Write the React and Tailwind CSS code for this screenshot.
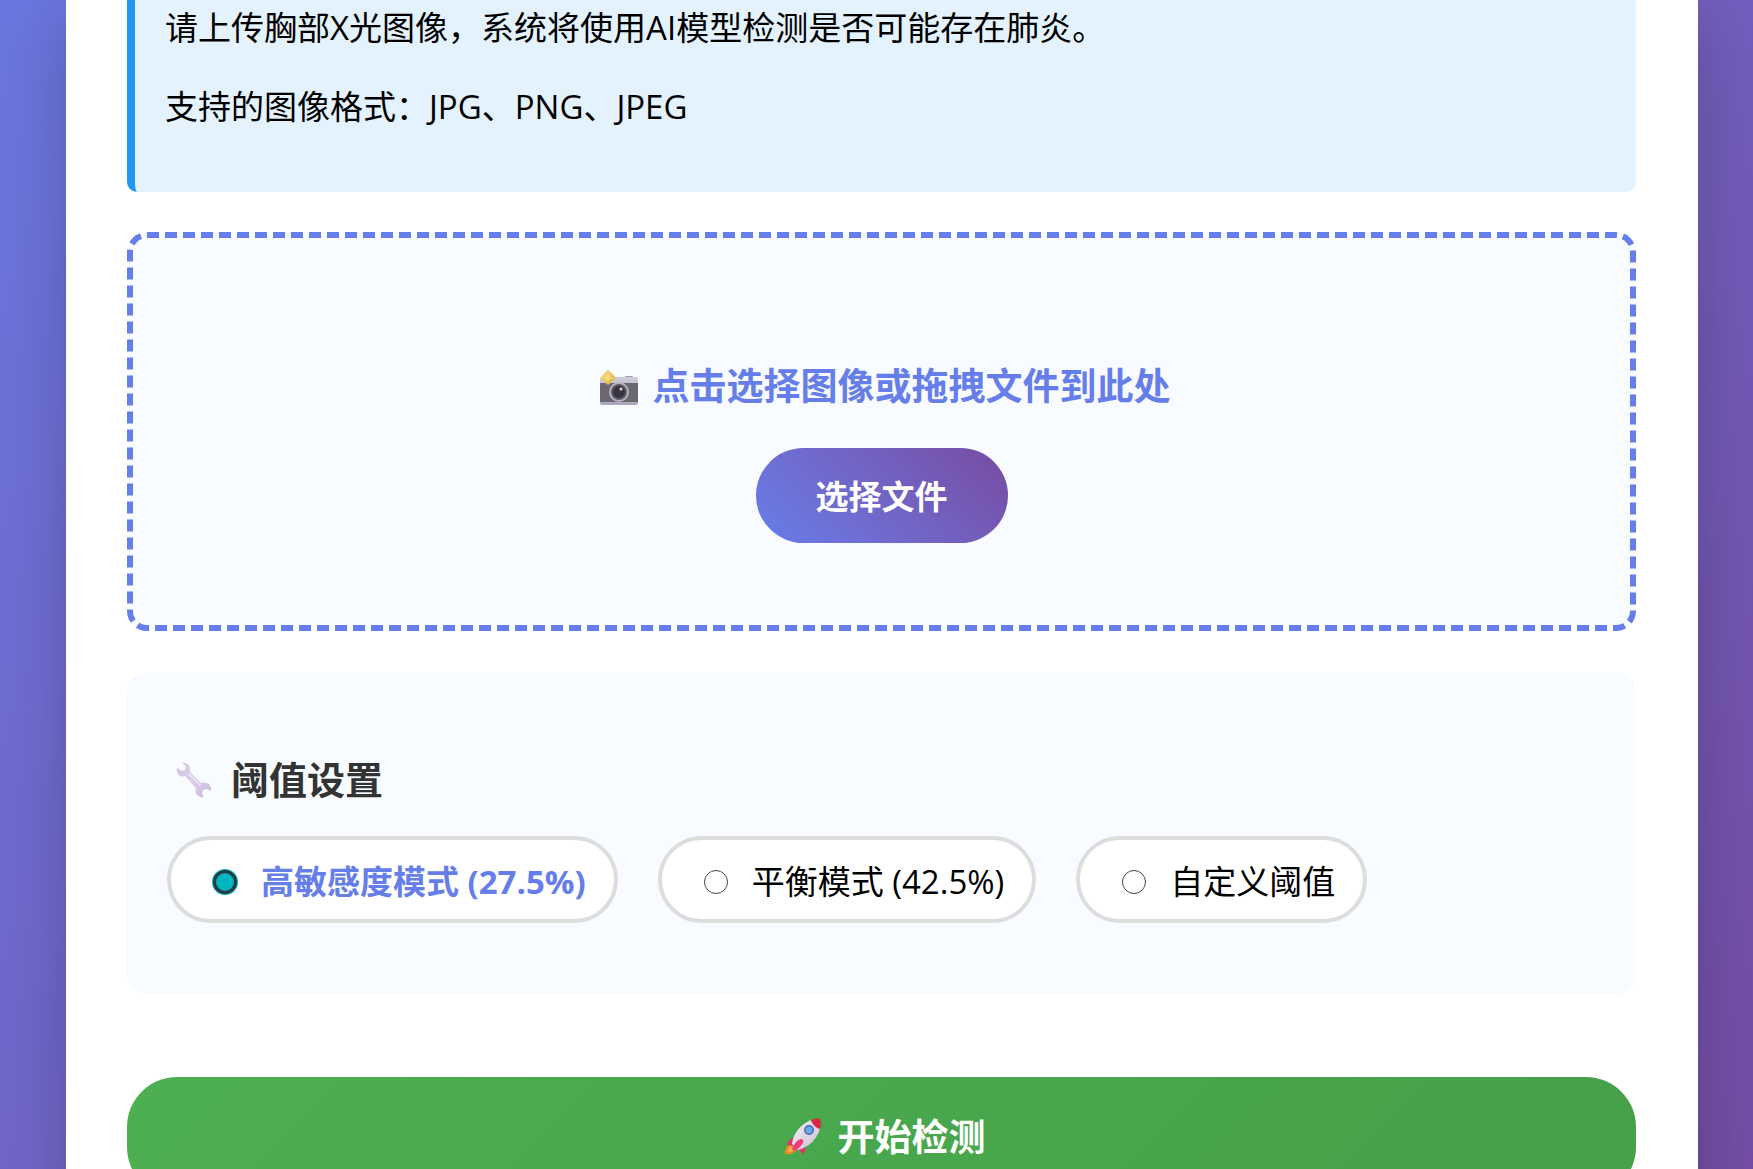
import { useRef, useState } from 'react';

const MODES = [
  { id: 'sensitive', label: '高敏感度模式 (27.5%)' },
  { id: 'balanced', label: '平衡模式 (42.5%)' },
  { id: 'custom', label: '自定义阈值' },
];

export default function App() {
  const [mode, setMode] = useState('sensitive');
  const fileRef = useRef(null);

  return (
    <div className="h-screen overflow-hidden bg-linear-135 from-[#6a76df] to-[#734da5] pr-[55px] pl-[66px] font-['Open_Sans','Noto_Sans_CJK_SC',sans-serif] text-[33px] leading-[46px] text-black">
      <main className="min-h-full bg-white pr-[62px] pl-[61px] shadow-[0_20px_60px_rgba(0,0,0,0.2)]">
        <InfoBox />
        <section className="mt-10 flex flex-col items-center rounded-[20px] border-6 border-dashed border-[#667eea] bg-[#f8fbff] pt-[122px] pb-[82px]">
          <h2 className="flex items-center gap-[10px] text-[37px] leading-[52px] font-bold text-[#667eea]">
            <CameraIcon />
            点击选择图像或拖拽文件到此处
          </h2>
          <input ref={fileRef} type="file" accept=".jpg,.jpeg,.png" className="hidden" aria-label="选择文件" />
          <button
            type="button"
            onClick={() => fileRef.current?.click()}
            className="mt-9 h-[95px] rounded-full bg-linear-45 from-[#667eea] to-[#764ba2] px-[60px] pt-[2px] font-bold text-white"
          >
            选择文件
          </button>
        </section>

        <section className="mt-[41px] rounded-[20px] bg-[#f8fbff] px-10 pt-20 pb-[71px]">
          <h3 className="flex items-center gap-[10px] text-[38px] leading-[52px] font-bold text-[#333]">
            <WrenchIcon />
            阈值设置
          </h3>
          <div className="mt-[30px] flex flex-wrap gap-10">
            {MODES.map((m) => (
              <ModeOption key={m.id} mode={m} checked={mode === m.id} onSelect={() => setMode(m.id)} />
            ))}
          </div>
        </section>

        <button
          type="button"
          className="mt-[83px] flex h-[120px] w-full items-center justify-center gap-[10px] rounded-[50px] bg-linear-135 from-[#4caf50] to-[#45a049] text-[37px] font-bold text-white"
        >
          <RocketIcon />
          开始检测
        </button>
      </main>
    </div>
  );
}

const InfoBox = () => (
  <section className="rounded-b-[10px] border-l-8 border-[#2196f3] bg-[#e3f2fd] px-[30px] pt-[5px] pb-[62px]">
    <p>请上传胸部X光图像，系统将使用AI模型检测是否可能存在肺炎。</p>
    <p className="mt-[33px]">支持的图像格式：JPG、PNG、JPEG</p>
  </section>
);

const ModeOption = ({ mode, checked, onSelect }) => (
  <label
    className={`flex h-[87px] cursor-pointer items-center rounded-full border-4 border-[#ddd] bg-white pt-1 pr-7 pl-[30px] ${checked ? 'font-bold text-[#667eea]' : ''}`}
  >
    <input
      type="radio"
      name="threshold"
      checked={checked}
      onChange={onSelect}
      className="mr-6 ml-3 size-6 appearance-none rounded-full border border-[#444] bg-white checked:border-3 checked:border-[#263a40] checked:bg-[#00b4c0] checked:ring-1 checked:ring-[#00b4c0]"
    />
    {mode.label}
  </label>
);

const CameraIcon = () => (
  <svg viewBox="0 0 50 50" className="size-[50px]" aria-hidden="true">
    <defs>
      <linearGradient id="cam-top" x1="0" y1="0" x2="0" y2="1">
        <stop offset="0" stopColor="#cfcbd9" />
        <stop offset="1" stopColor="#aaa5b8" />
      </linearGradient>
      <linearGradient id="cam-star" x1="0" y1="0" x2="1" y2="1">
        <stop offset="0" stopColor="#fbe08a" />
        <stop offset="1" stopColor="#e0ae35" />
      </linearGradient>
    </defs>
    <rect x="32" y="15" width="8" height="4" rx="1" fill="#a19bab" />
    <rect x="7" y="16" width="38" height="28" rx="2" fill="url(#cam-top)" />
    <rect x="7" y="22" width="38" height="19" fill="#6b6873" />
    <circle cx="26" cy="31" r="10" fill="#b9b4c5" />
    <circle cx="26" cy="31" r="8" fill="#5b5764" />
    <circle cx="26" cy="31" r="6" fill="#38343f" />
    <circle cx="28" cy="28" r="1.5" fill="#dcd8e4" />
    <path d="M15 9q1 0 1.5 1l5 5q1.5 1.5 0 3l-5 5q-1.5 1.5-3 0l-5-5q-1.5-1.5 0-3l5-5q.5-1 1.5-1z" fill="url(#cam-star)" />
    <path d="M15 12l1.5 3.5L20 17l-3.5 1.5L15 21l-1.5-2.5L10 17l3.5-1.5z" fill="#fff0a5" opacity=".5" />
  </svg>
);

const WrenchIcon = () => (
  <svg viewBox="0 0 54 54" className="size-[54px]" aria-hidden="true">
    <defs>
      <linearGradient id="wrench" x1="0" y1="0" x2="1" y2="1">
        <stop offset="0" stopColor="#d2c4df" />
        <stop offset=".5" stopColor="#dccdec" />
        <stop offset="1" stopColor="#cbbcdc" />
      </linearGradient>
    </defs>
    <path
      d="M15 11c6-1 9 4 8 9l11 11c6-2 11 2 10 8l-4-2-4 1-1 4 2 3c-6 1-10-4-8-9L18 24c-5 2-9-2-8-8l5 3 3-1 1-4z"
      fill="url(#wrench)"
    />
    <path d="M22 22l11 11" stroke="#f2e9fa" strokeWidth="1.5" strokeLinecap="round" />
  </svg>
);

const RocketIcon = () => (
  <svg viewBox="0 0 50 50" className="size-[50px]" aria-hidden="true">
    <defs>
      <linearGradient id="rocket-body" x1="0" y1="0" x2="1" y2="1">
        <stop offset="0" stopColor="#f5eef8" />
        <stop offset="1" stopColor="#c9bfd3" />
      </linearGradient>
    </defs>
    <path d="M12 32c-4 2-5 6-5 10 5 1 10-1 12-5z" fill="#f18a28" />
    <path d="M13 34c-2 1-3 4-3 6 3 0 5-1 6-3z" fill="#fbb34a" />
    <path d="M20 25c-6 0-10 3-11 8l9 1zM26 32c2 3 2 7-1 10l-7-7z" fill="#e92f69" />
    <path d="M33 8l9 9C39 27 31 35 20 38l-6-6C15 21 23 12 33 8z" fill="url(#rocket-body)" />
    <path d="M33 8c3-1 6-2 9-1 1 3 1 7 0 10-4-1-8-5-9-9z" fill="#d92644" />
    <circle cx="31" cy="18" r="5" fill="#466b9d" />
    <circle cx="31" cy="18" r="3.5" fill="#67a9ed" />
    <path d="M23 27c2 0 3 2 2 4-2 3-5 6-9 8l-2-2c2-5 5-9 9-10z" fill="#ee3c78" />
  </svg>
);
